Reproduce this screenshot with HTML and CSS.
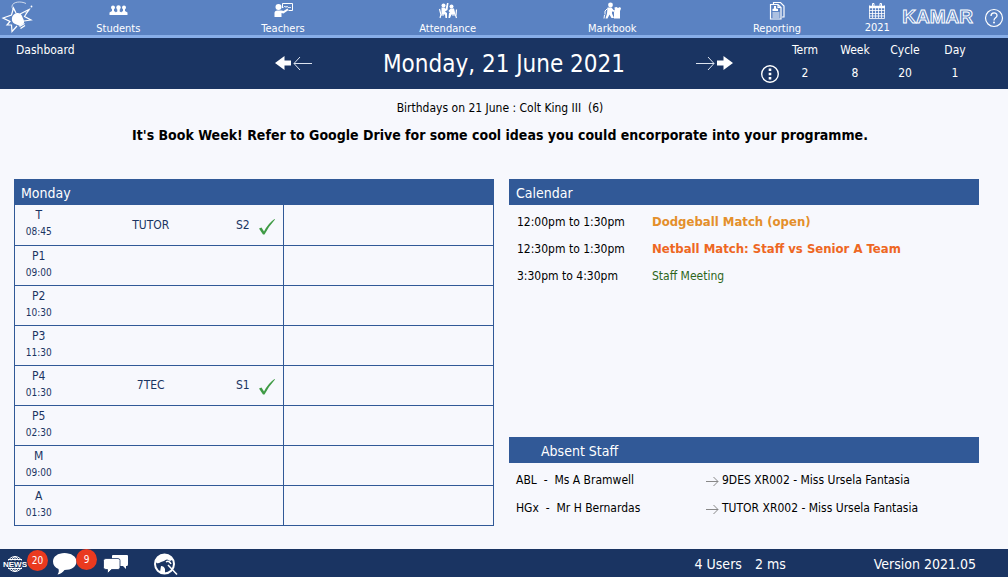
FILE: index.html
```html
<!DOCTYPE html>
<html lang="en">
<head>
<meta charset="utf-8">
<meta name="viewport" content="width=device-width, initial-scale=1">
<title>Dashboard - KAMAR</title>
<link rel="stylesheet" href="styles.css">
</head>
<body>
<header class="topbar">
  <a class="logo" href="#" aria-label="Home">
    <svg width="34" height="34" viewBox="0 0 34 34" fill="none" stroke="#fff">
      <path d="M16 13L13.500 8L11.500 15L3 18L10 21.500L7 25L11.500 25L12 31.500L17 26M20 14L29 9.500L24.500 16.500L31 20L24 21" stroke-width="1.200"/>
      <path d="M26 3.500C21 1 13 1.500 12 6C12 8 13 10 15 11" stroke-width=".7"/>
      <path d="M14 14.500C17 12 21 13 22 16C23 19 24.500 20 24 23L20 26C17 24.500 13 24 12 20.500C11.500 17.500 12.500 15.500 14 14.500Z" fill="#fff" stroke="none"/>
      <path d="M19.500 26.500L24.500 23.500M20.500 28.500L25 25.500" stroke-width="1.400"/>
      <path d="M25 13Q29 12 30 9" stroke-width=".5"/>
      <circle cx="31.500" cy="6.500" r=".9" fill="#fff" stroke="none"/>
    </svg>
  </a>
  <nav class="nav" aria-label="Main">
    <a href="#">
      <svg width="20" height="20" viewBox="0 0 20 20" fill="#fff"><circle cx="5" cy="6.500" r="2"/><circle cx="10.500" cy="6.500" r="2.200"/><circle cx="16" cy="6.500" r="2"/><path d="M4 7h2v3l1.500 1V14H1.500v-2.500L4 10zM15 7h2v3l2.500 1.500V14h-6v-3l1.500-1zM9.300 8h2.400v2.500l3 1.500v2H6.300v-2l3-1.500z"/></svg>
      <span>Students</span>
    </a>
    <a href="#">
      <svg width="20" height="20" viewBox="0 0 20 20" fill="#fff"><circle cx="5.500" cy="6" r="3"/><path d="M1.500 16v-4q0-2.500 3-2.500h4l2 .5 4-2.500 1 1.500-5 3.500-2-.5V16z"/><path d="M9.500 2.500h10v7h-4M9.500 2.500V7" fill="none" stroke="#fff"/><path d="M10.500 6.500l1.500-1.500 1 1.500 1-1.500 1 1.500h3" fill="none" stroke="#fff" stroke-width=".8"/></svg>
      <span>Teachers</span>
    </a>
    <a href="#">
      <svg width="20" height="20" viewBox="0 0 20 20" fill="#fff"><circle cx="5.500" cy="4.500" r="2"/><circle cx="13.500" cy="5.500" r="2"/><path d="M3.500 6.500h3l1 1.500L9 2h1.500L9.500 9 7 10.500l2 1.500v5H7.500L7 13.500H3.500zM12.500 7.500h3.500l1.500 6h-4L12 17h-1.500l.5-5 1-.5-1.500-1.500z"/><path d="M1.500 8L3 14h3M3 13.500L2 17M18.500 8.500L18 14h-4M17.500 14l1 3" fill="none" stroke="#fff" stroke-width="1.200"/></svg>
      <span>Attendance</span>
    </a>
    <a href="#">
      <svg width="20" height="20" viewBox="0 0 20 20" fill="#fff"><circle cx="8.500" cy="4" r="2.400"/><path d="M5.500 6.500h4l2 2.500 2 .5V11l-3.500-.5v2l2 4.500H9.500L7.500 13.500 5.500 17.500H3.500l1.500-5z"/><path d="M5.500 7.500L3 10v3.500M2.500 14L2 17.500" fill="none" stroke="#fff"/><path d="M12.500 6.500L14.500 6l1.500 1 2-1 1 1.500-1 2.500v7.500h-6V11h1z"/></svg>
      <span>Markbook</span>
    </a>
    <a href="#">
      <svg width="20" height="20" viewBox="0 0 20 20" fill="none" stroke="#fff" stroke-width="1.200"><path d="M6.500 3V1.500h7L17 5v11h-2"/><path d="M3.500 3.500h7.500l3 3V18H3.500zM11 3.500v3h3"/><path d="M5.500 12h7M5.500 14h7M5.500 16h7"/><path d="M7 5h2v2.500l2 .5v2H5.500V8L7 7.500z" fill="#fff" stroke="none"/></svg>
      <span>Reporting</span>
    </a>
  </nav>
  <div class="tools">
    <a class="year" href="#">
      <svg width="18" height="18" viewBox="0 0 18 18" fill="none" stroke="#fff"><path d="M1.500 3.500v13h15v-13M4.500 5v11M7.500 5v11M10.500 5v11M13.500 5v11M1 8.500h16M1 11.500h16M1 14h16" stroke-width=".8"/><path d="M1 5h16" stroke-width="2.500"/><path d="M4.500 5V1.500h1.500V4M12 4V1.500h1.500V5"/></svg>
      <span>2021</span>
    </a>
    <span class="brand">KAMAR</span>
    <button class="icon-button" aria-label="Help">
      <svg width="20" height="20" viewBox="0 0 20 20" fill="none" stroke="#fff"><circle cx="10" cy="10" r="8.500" stroke-width="1.200"/><path d="M7 8c0-4 6-4 6-.5 0 2.500-3 2.200-3 5" stroke-width="1.300"/><circle cx="10" cy="14.500" r="1" fill="#fff" stroke="none"/></svg>
    </button>
  </div>
</header>

<section class="datebar">
  <div class="page-name">Dashboard</div>
  <div class="date-nav">
    <div class="arrows">
      <button class="icon-button" aria-label="Previous week"><svg width="17" height="16" viewBox="0 0 17 16" fill="#fff"><path d="M0 7l9.500-7v4.500h6.500v5H9.500V14z"/></svg></button>
      <button class="icon-button" aria-label="Previous day"><svg width="20" height="16" viewBox="0 0 20 16" fill="none" stroke="#dce3ef"><path d="M2 7.500h18M8 1L2 7.500 8 14"/></svg></button>
    </div>
    <h1>Monday, 21 June 2021</h1>
    <div class="arrows">
      <button class="icon-button" aria-label="Next day"><svg width="20" height="16" viewBox="0 0 20 16" fill="none" stroke="#dce3ef"><path d="M0 7.500h18M12 1L18 7.500 12 14"/></svg></button>
      <button class="icon-button" aria-label="Next week"><svg width="17" height="16" viewBox="0 0 17 16" fill="#fff"><path d="M17 7L7.500 0v4.500H1v5h6.500V14z"/></svg></button>
    </div>
  </div>
  <div class="term">
    <button class="icon-button more" aria-label="More"><svg width="20" height="20" viewBox="0 0 20 20" fill="#fff"><circle cx="10" cy="10" r="8.300" fill="none" stroke="#fff" stroke-width="1.400"/><path d="M8.700 4.500h2.600v2.600H8.700zM8.700 8.700h2.600v2.600H8.700zM8.700 12.900h2.600v2.600H8.700z"/></svg></button>
    <dl>
      <div><dt>Term</dt><dd>2</dd></div>
      <div><dt>Week</dt><dd>8</dd></div>
      <div><dt>Cycle</dt><dd>20</dd></div>
      <div><dt>Day</dt><dd>1</dd></div>
    </dl>
  </div>
</section>

<main>
  <div class="notices">
    <p>Birthdays on 21 June : Colt King III &nbsp;(6)</p>
    <p class="notice">It's Book Week! Refer to Google Drive for some cool ideas you could encorporate into your programme.</p>
  </div>
  <div class="panels">
    <section>
      <h2>Monday</h2>
      <table class="timetable">
        <colgroup><col class="c-time"><col class="c-subject"><col class="c-room"><col class="c-tick"><col></colgroup>
        <tbody>
          <tr><th scope="row">T<small>08:45</small></th><td class="subject">TUTOR</td><td class="room">S2</td><td class="tick"><svg width="18" height="18" viewBox="0 0 18 18" fill="#3f9b45" role="img" aria-label="Marked"><path d="M0 10.500l2.500-1 2.500 4Q9 5.500 15.500 1L16 1.500Q10 8 5.500 16.500H4z"/></svg></td><td></td></tr>
          <tr><th scope="row">P1<small>09:00</small></th><td></td><td></td><td class="tick"></td><td></td></tr>
          <tr><th scope="row">P2<small>10:30</small></th><td></td><td></td><td class="tick"></td><td></td></tr>
          <tr><th scope="row">P3<small>11:30</small></th><td></td><td></td><td class="tick"></td><td></td></tr>
          <tr><th scope="row">P4<small>01:30</small></th><td class="subject">7TEC</td><td class="room">S1</td><td class="tick"><svg width="18" height="18" viewBox="0 0 18 18" fill="#3f9b45" role="img" aria-label="Marked"><path d="M0 10.500l2.500-1 2.500 4Q9 5.500 15.500 1L16 1.500Q10 8 5.500 16.500H4z"/></svg></td><td></td></tr>
          <tr><th scope="row">P5<small>02:30</small></th><td></td><td></td><td class="tick"></td><td></td></tr>
          <tr><th scope="row">M<small>09:00</small></th><td></td><td></td><td class="tick"></td><td></td></tr>
          <tr><th scope="row">A<small>01:30</small></th><td></td><td></td><td class="tick"></td><td></td></tr>
        </tbody>
      </table>
    </section>
    <div class="side">
      <section>
        <h2>Calendar</h2>
        <table class="calendar">
          <tbody>
            <tr><td>12:00pm to 1:30pm</td><td class="event amber">Dodgeball Match (open)</td></tr>
            <tr><td>12:30pm to 1:30pm</td><td class="event orange">Netball Match: Staff vs Senior A Team</td></tr>
            <tr><td>3:30pm to 4:30pm</td><td class="green">Staff Meeting</td></tr>
          </tbody>
        </table>
      </section>
      <section class="absent">
        <h2>Absent Staff</h2>
        <table>
          <tbody>
            <tr><td>ABL &nbsp;- &nbsp;Ms A Bramwell</td><td><div class="cover"><svg width="14" height="12" viewBox="0 0 14 12" fill="none" stroke="#888"><path d="M1 7.500h12M8.500 3L13 7.500 8.500 12"/></svg>9DES XR002 - Miss Ursela Fantasia</div></td></tr>
            <tr><td>HGx &nbsp;- &nbsp;Mr H Bernardas</td><td><div class="cover"><svg width="14" height="12" viewBox="0 0 14 12" fill="none" stroke="#888"><path d="M1 7.500h12M8.500 3L13 7.500 8.500 12"/></svg>TUTOR XR002 - Miss Ursela Fantasia</div></td></tr>
          </tbody>
        </table>
      </section>
    </div>
  </div>
</main>

<footer class="statusbar">
  <div class="status-icons">
    <button class="icon-button news" aria-label="News, 20 unread">
      <svg width="24" height="20" viewBox="0 0 24 20" fill="none" stroke="#fff"><circle cx="12" cy="10" r="7.500" /><path d="M12 2v16M12 2Q2 10 12 18M12 2q10 8 0 16M5 5.500h14M5 14.500h14"/><path d="M0 6.500h24v7H0z" fill="#1a3462" stroke="none"/><text x="12" y="13" text-anchor="middle" class="news-text">NEWS</text></svg>
      <span class="badge">20</span>
    </button>
    <button class="icon-button chat" aria-label="Messages, 9 unread">
      <svg width="26" height="22" viewBox="0 0 26 22" fill="#fff"><path d="M12.500 0C19 0 24.500 3.500 24.500 8.500s-5 8.500-12 8.500c-2 2.500-4 4-7 4.500 1.500-2 1.500-3.500 1-5.500C3 14.500 1 12 1 8.500c0-5 5-8.500 11.500-8.500z"/></svg>
      <span class="badge">9</span>
    </button>
    <button class="icon-button discuss" aria-label="Discussions">
      <svg width="26" height="20" viewBox="0 0 26 20" fill="#fff"><path d="M10 1h14q1 0 1 1v8q0 2-1 2h-1v3l-3-3H10q-1 0-1-1V2q0-1 1-1z"/><path d="M3 4.500H15q2 0 2 2v7q0 2-2 2H8.500L4.500 19.500v-4H3q-2.500 0-2.500-2V6.500q0-2 2.500-2z" stroke="#1a3462" stroke-width=".8"/></svg>
    </button>
    <button class="icon-button" aria-label="Search">
      <svg width="26" height="24" viewBox="0 0 26 24" fill="none" stroke="#fff"><circle cx="11.500" cy="12" r="9.500" stroke-width="2"/><path d="M2.500 9Q5 2 12 2.500q5 0 8 5L17 9q-3-3-6 0l-3 1q-3 2-4.500 1zM8 14q3 0 4 3v4.500q-3 0-5-1.500z" fill="#fff" stroke="none"/><path d="M15 13l9 9.500" stroke-width="1.500"/><path d="M13 10q3-2 5 2" stroke-width="1.500"/></svg>
    </button>
  </div>
  <div class="status-text">4 Users</div>
  <div class="status-text">2 ms</div>
  <div class="version">Version 2021.05</div>
</footer>
</body>
</html>
```

FILE: styles.css
```css
* { box-sizing: border-box; }

body {
  margin: 0;
  min-height: 100vh;
  display: flex;
  flex-direction: column;
  background: #f7f8fd;
  color: #000;
  font: 12px/16px Tahoma, "DejaVu Sans Condensed", "Noto Sans", sans-serif;
}

h1, h2, p, dl, dd { margin: 0; font-weight: 400; }
a { color: inherit; text-decoration: none; }
svg { display: block; flex: none; }
table { width: 100%; border-collapse: collapse; table-layout: fixed; }
td, th { padding: 0; font-weight: 400; text-align: left; }

.icon-button {
  display: block;
  padding: 0;
  border: 0;
  background: none;
  color: inherit;
  font: inherit;
  cursor: pointer;
}

.topbar {
  display: flex;
  height: 38px;
  background: #5a82c2;
  border-bottom: 3px solid #88aee8;
  color: #fff;
  font-size: 11px;
}
.logo { width: 36px; }
.nav { flex: 1; display: grid; grid-template-columns: repeat(5, 1fr); }
.nav a, .year { display: flex; flex-direction: column; align-items: center; }
.nav span, .year span { line-height: 16px; }
.nav a { padding-top: 1px; }
.year { width: 36px; padding-top: 2px; }
.tools { display: flex; padding-right: 4px; }
.brand {
  margin: 0 11px 0 7px;
  font: bold 19px/34px "Liberation Sans", sans-serif;
  color: #5a82c2;
  -webkit-text-stroke: 1px #fff;
}
.tools .icon-button { align-self: center; }

.datebar {
  display: grid;
  grid-template-columns: 1fr 458px 1fr;
  height: 51px;
  background: #1a3462;
  color: #fff;
}
.page-name { padding: 4px 16px; }
.date-nav { display: flex; align-items: center; justify-content: space-between; }
.date-nav h1 { font-size: 24px; line-height: 32px; }
.arrows { display: flex; }
.term { display: flex; justify-content: flex-end; padding-right: 28px; }
.term .more { align-self: flex-end; padding-bottom: 5px; }
dl { display: flex; padding-top: 4px; text-align: center; }
dl div { width: 50px; }
dd { padding-top: 7px; }

main { flex: 1; padding: 11px 29px 23px 14px; }
.notices { height: 79px; margin-right: -7px; text-align: center; }
.notice { padding-top: 9px; font-size: 14px; line-height: 20px; font-weight: 700; }

.panels { display: grid; grid-template-columns: 48fr 47fr; column-gap: 15px; }
h2 {
  height: 26px;
  padding-left: 7px;
  background: #315997;
  color: #fff;
  font-size: 14px;
  line-height: 28px;
}

.timetable { border: 1px solid #315997; border-top: 0; color: #1a3462; }
.c-time { width: 48px; }
.c-subject { width: 36%; }
.c-room { width: 24px; }
.c-tick { width: 25px; }
.timetable tr { height: 40px; border-bottom: 1px solid #315997; }
.timetable th { text-align: center; vertical-align: top; padding-top: 2px; }
.timetable small { display: block; font-size: 10px; line-height: 17px; }
.timetable .subject { text-align: center; padding-left: 4px; }
.timetable .room { padding-left: 1px; }
.timetable .tick { border-right: 1px solid #315997; }
.tick svg { margin-top: 4px; }

.side { display: flex; flex-direction: column; justify-content: space-between; }
.calendar { margin-top: 3px; }
.calendar tr { height: 27px; }
.calendar td:first-child { width: 143px; padding-left: 8px; }
.calendar .event { font-size: 13px; font-weight: 700; }
.amber { color: #e48f2b; }
.orange { color: #ee6723; }
.green { color: #2d661b; }
.absent { padding-bottom: 4px; }
.absent h2 { padding-left: 32px; }
.absent table { margin-top: 3px; }
.absent tr { height: 28px; }
.absent td:first-child { width: 196px; padding-left: 7px; }
.cover { display: flex; align-items: center; gap: 3px; }

.statusbar {
  display: flex;
  align-items: center;
  height: 28px;
  padding: 2px 32px 0 3px;
  background: #1a3462;
  color: #fff;
  font-size: 14px;
}
.status-icons { flex: 1; display: flex; align-items: center; }
.news, .chat { position: relative; margin-right: 25px; }
.discuss { margin-right: 24px; }
.badge {
  position: absolute;
  top: -4px;
  left: 24px;
  width: 21px;
  height: 21px;
  border-radius: 50%;
  background: #ea3a1f;
  font-size: 10px;
  line-height: 21px;
}
.news-text { font: bold 8px "Liberation Sans", sans-serif; fill: #fff; stroke: none; }
.status-text { margin-right: 13px; }
.version { margin-left: 75px; }
```
